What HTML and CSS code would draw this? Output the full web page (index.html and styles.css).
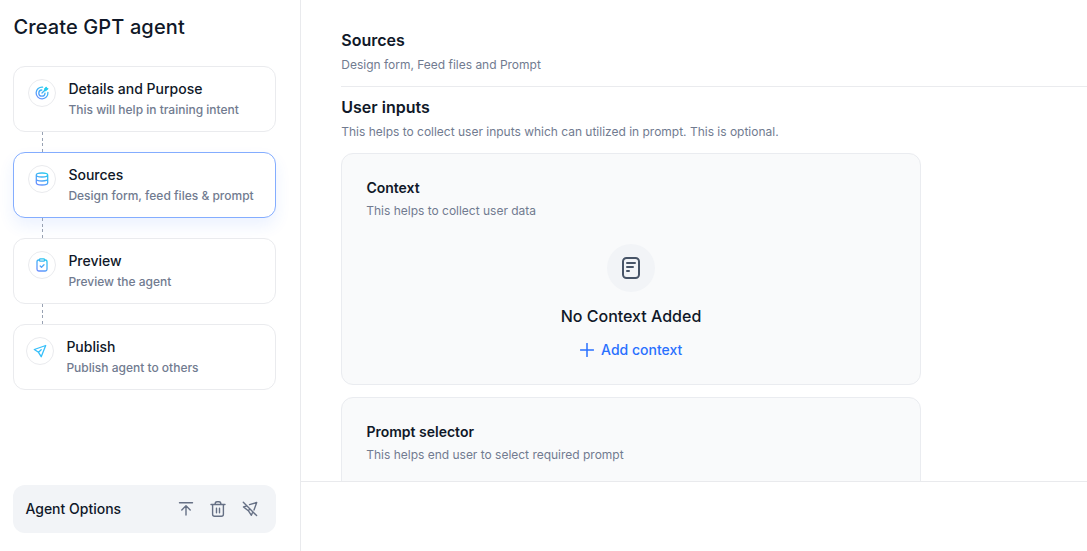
FILE: index.html
```html
<!DOCTYPE html>
<html lang="en">
<head>
<meta charset="utf-8">
<title>Create GPT agent</title>
<link rel="stylesheet" href="styles.css">
</head>
<body>
<svg class="defs" width="0" height="0" aria-hidden="true">
  <defs>
    <linearGradient id="brand" gradientUnits="userSpaceOnUse" x1="12" y1="1" x2="4" y2="14">
      <stop offset="0" stop-color="#22ccee"/>
      <stop offset="1" stop-color="#6c8cff"/>
    </linearGradient>
  </defs>
</svg>
<div class="app">
  <aside class="sidebar">
    <h1 class="title">Create GPT agent</h1>
    <nav class="steps">
      <a class="step">
        <span class="step-icon"><svg width="14" height="14" viewBox="0 0 14 14" class="grad"><path d="M7.600 1.100A5.900 5.900 0 1 0 12.900 6.400M6.800 4A3.100 3.100 0 1 0 10 7.200M7 7l3.400-3.300"/><path class="solid" d="M9.600 4.400V2.600L11.300.9l.5 1.300 1.300.5-1.700 1.700z"/></svg></span>
        <span class="step-text"><span class="step-name">Details and Purpose</span><span class="step-note">This will help in training intent</span></span>
      </a>
      <div class="link"></div>
      <a class="step active">
        <span class="step-icon"><svg width="14" height="14" viewBox="0 0 14 14" class="grad"><path d="M1.300 3C1.300 1.700 3 1 7 1s5.700.7 5.700 2S11 5 7 5s-5.700-.7-5.700-2zM1.300 3v7.700C1.300 12.300 3 13 7 13s5.700-.7 5.700-2.300V3M1.300 6.900C1.300 8.300 3 9 7 9s5.700-.7 5.700-2.100"/></svg></span>
        <span class="step-text"><span class="step-name">Sources</span><span class="step-note">Design form, feed files &amp; prompt</span></span>
      </a>
      <div class="link"></div>
      <a class="step">
        <span class="step-icon"><svg width="14" height="14" viewBox="0 0 14 14" class="grad"><path d="M4.500 2H3.700C2.500 2 2 2.600 2 3.700v7.600C2 12.500 2.500 13 3.700 13h6.600c1.200 0 1.700-.5 1.700-1.700V3.700C12 2.600 11.500 2 10.300 2h-.8M5.200 8l1.300 1.300L9 6.700"/><rect x="4.500" y=".9" width="5" height="2.300" rx=".8"/></svg></span>
        <span class="step-text"><span class="step-name">Preview</span><span class="step-note">Preview the agent</span></span>
      </a>
      <div class="link"></div>
      <a class="step last">
        <span class="step-icon"><svg width="14" height="14" viewBox="0 0 14 14" class="cyan"><path d="M12.700 1.500 1.300 5.500l4.200 2.800 2.700 4.400zM5.500 8.300l2.700-2.500"/></svg></span>
        <span class="step-text"><span class="step-name">Publish</span><span class="step-note">Publish agent to others</span></span>
      </a>
    </nav>
    <div class="options">
      <span class="options-label">Agent Options</span>
      <svg width="16" height="16" viewBox="0 0 16 16"><path d="M1.500 1.800h13M8 14V5M3.800 8.900 8 4.700l4.200 4.200"/></svg>
      <svg width="16" height="16" viewBox="0 0 16 16"><path d="M1 3.500h14M5 3.500c.1-1.700.8-2.700 2-2.700h2c1.200 0 1.900 1 2 2.700M2.600 3.500v9.700c0 1.300.7 2 2 2h6.800c1.300 0 2-.7 2-2V3.500M6.500 7.200v4.600M9.500 7.200v4.600"/></svg>
      <svg width="16" height="16" viewBox="0 0 16 16"><path d="m1.300 1.300 13.300 13.300M7.500 3.600 14.700 1.500 12 9M10.300 12 9.400 14.300 6.300 9.700 1.500 6l2.600-.9M6.300 9.700l1.600-1.600"/></svg>
    </div>
  </aside>
  <main class="main">
    <div class="content">
      <header class="head">
        <h2 class="heading">Sources</h2>
        <p class="note">Design form, Feed files and Prompt</p>
      </header>
      <section class="inputs">
        <h2 class="heading">User inputs</h2>
        <p class="note">This helps to collect user inputs which can utilized in prompt. This is optional.</p>
        <div class="panel">
          <h3 class="panel-name">Context</h3>
          <p class="note">This helps to collect user data</p>
          <div class="empty">
            <span class="empty-icon"><svg width="24" height="24" viewBox="0 0 24 24"><rect x="4" y="2" width="16" height="20" rx="3.500"/><path d="M8 7h8M8 11h6M8 15h2"/></svg></span>
            <p class="empty-text">No Context Added</p>
            <button class="add"><svg width="14" height="14" viewBox="0 0 14 14"><path d="M7 .5v13M.5 7h13"/></svg>Add context</button>
          </div>
        </div>
        <div class="panel">
          <h3 class="panel-name">Prompt selector</h3>
          <p class="note">This helps end user to select required prompt</p>
        </div>
      </section>
    </div>
    <footer class="footer"></footer>
  </main>
</div>
</body>
</html>
```
FILE: styles.css
```css
* { box-sizing: border-box; }
body { margin: 0; font-family: Inter, sans-serif; color: #101828; background: #fff; }
h1, h2, h3, p { margin: 0; }
svg { display: block; flex: none; fill: none; stroke-linecap: round; stroke-linejoin: round; }
.defs { position: absolute; }
.app { display: flex; width: 100%; height: 551px; overflow: hidden; }

.sidebar { display: flex; flex-direction: column; flex: none; width: 301px; padding: 12px 24px 18px 13px; border-right: 1px solid #e9eaed; }
.title { padding-left: .4px; font-size: 20px; line-height: 30px; font-weight: 500; letter-spacing: .12px; }
.steps { display: flex; flex-direction: column; margin-top: 24px; }
.step { display: flex; gap: 12.400px; height: 66px; padding: 12px 14px; border: 1px solid #eaebee; border-radius: 12px; background: #fff; }
.step.active { border-color: #84adff; box-shadow: 0 8px 16px rgba(41, 112, 255, .09); }
.step.last { padding-left: 12px; }
.step-icon { display: flex; align-items: center; justify-content: center; flex: none; width: 28px; height: 28px; border: 1px solid #eaebee; border-radius: 50%; }
.grad { stroke: url(#brand); stroke-width: 1.3; }
.solid { fill: #22ccee; stroke: #22ccee; stroke-width: .9; }
.cyan { stroke: #36bffa; stroke-width: 1.3; }
.step-text { display: flex; flex-direction: column; white-space: nowrap; }
.step-name { font-size: 14px; line-height: 20px; font-weight: 500; }
.step-note { margin-top: 2px; font-size: 12px; line-height: 18px; font-weight: 500; color: #717b90; }
.link { width: 1px; height: 20px; margin-left: 29px; background: repeating-linear-gradient(#98a2b3 0 3px, transparent 3px 5.670px); }
.options { display: flex; align-items: center; gap: 16px; height: 48px; margin-top: auto; padding: 0 18px 0 12.400px; border-radius: 12px; background: #f2f4f7; }
.options-label { flex: 1; font-size: 14px; line-height: 20px; font-weight: 500; }
.options svg { stroke: #667085; stroke-width: 1.400; }

.main { display: flex; flex-direction: column; flex: 1; min-width: 0; }
.content { flex: none; height: 481px; padding: 28px 0 0 40px; overflow: hidden; }
.head { height: 59px; border-bottom: 1px solid #eaebee; }
.heading { padding-left: .3px; font-size: 16px; line-height: 24px; font-weight: 600; }
.note { margin-top: 4px; padding-left: .3px; font-size: 12px; line-height: 18px; letter-spacing: -.01px; color: #717b90; }
.inputs { display: flex; flex-direction: column; padding-top: 8px; }
.panel { width: 580px; height: 232px; margin-top: 12px; padding: 24px; border: 1px solid #eaecf0; border-radius: 12px; background: #f9fafb; }
.panel-name { padding-left: .4px; font-size: 14px; line-height: 20px; font-weight: 600; }
.empty { display: flex; flex-direction: column; align-items: center; margin-top: 24px; }
.empty-icon { display: flex; align-items: center; justify-content: center; width: 48px; height: 48px; border-radius: 50%; background: #f2f4f7; }
.empty-icon svg { stroke: #475467; stroke-width: 2; }
.empty-text { margin-top: 12px; font-size: 16px; line-height: 24px; font-weight: 500; }
.add { display: flex; align-items: center; gap: 7.400px; margin-top: 12px; padding: 0; border: 0; background: none; font: 500 14px/20px Inter, sans-serif; color: #2970ff; }
.add svg { stroke: currentColor; stroke-width: 1.500; }
.footer { flex: 1; border-top: 1px solid #e9eaed; }
```
